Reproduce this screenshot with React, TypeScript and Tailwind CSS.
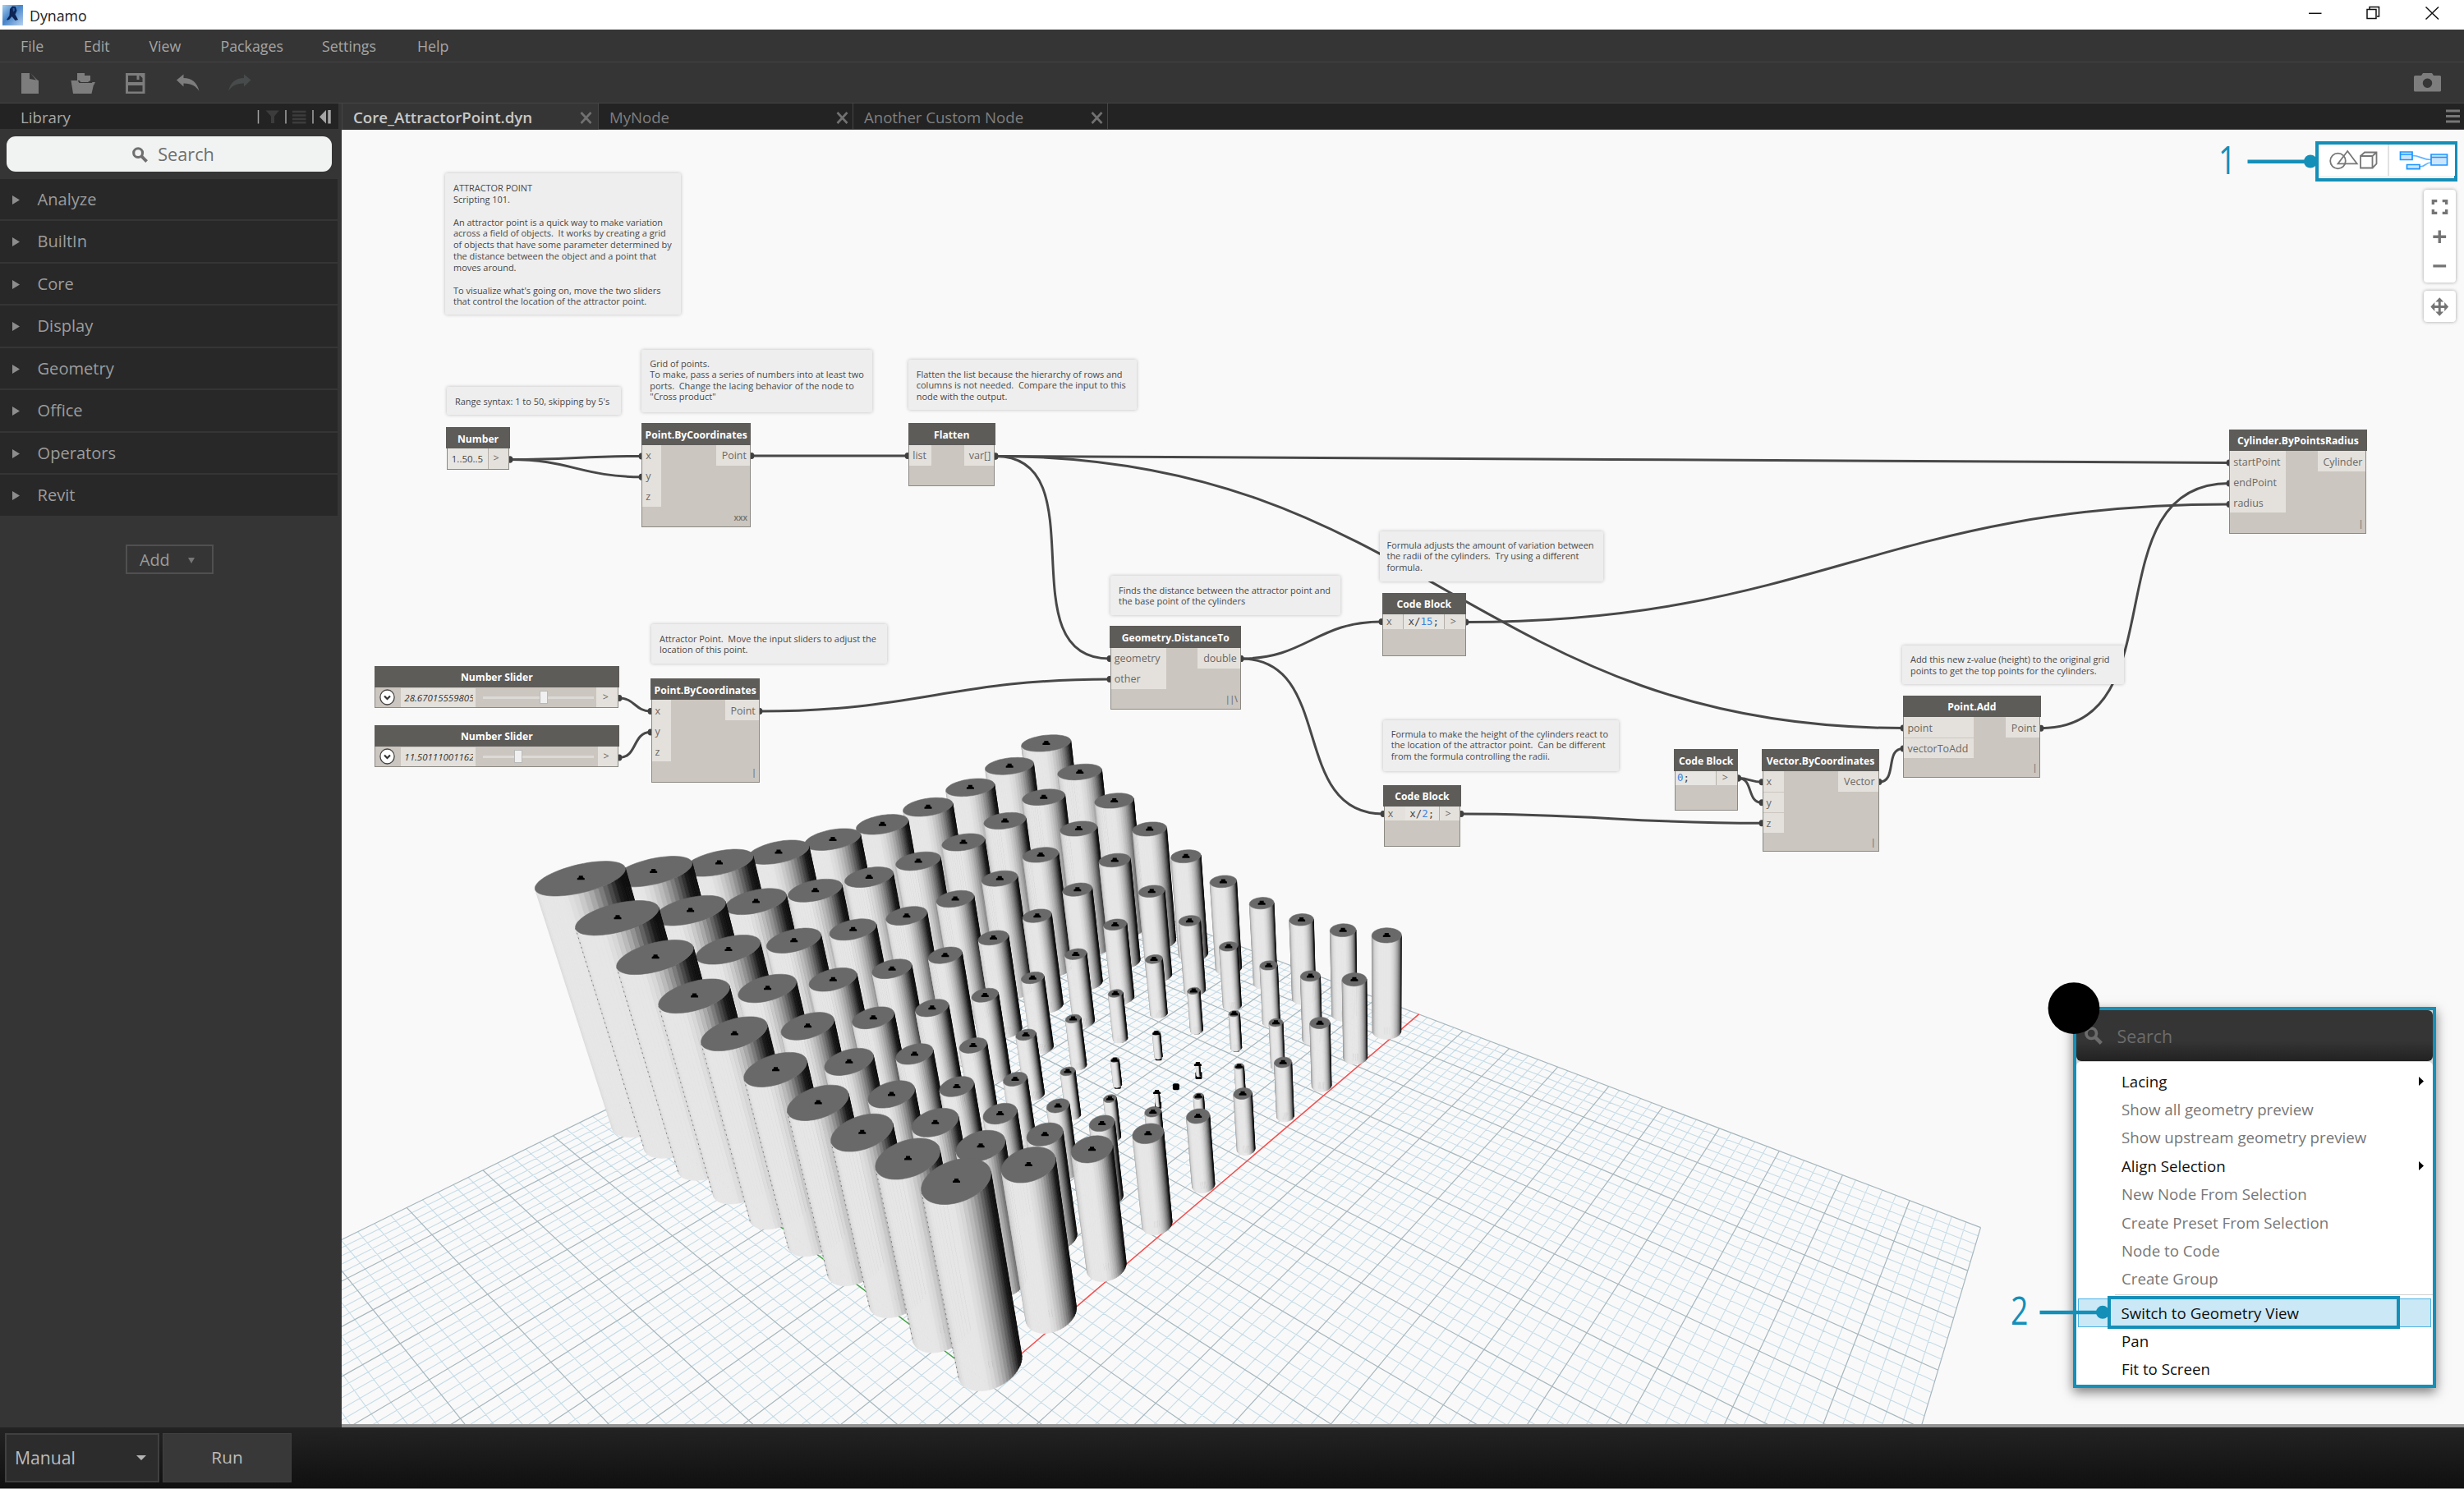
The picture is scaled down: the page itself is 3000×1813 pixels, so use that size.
import React from 'react'

/* ---------- 3D preview: camera and scene ---------- */

const UNIT = 50
const CAM = [-29.3, -51.7]
const M = [1.593873, -1.215737, -0.263103, 0.003081, -0.863176, -0.578997, -1.666049, 0.966159, 0.514364, 0.353287, -0.267914]

function project(X: number, Y: number, Z: number): [number, number] {
  const x = X / UNIT, y = Y / UNIT, z = Z / UNIT
  const d = M[8] * x + M[9] * y + M[10] * z + 1
  return [1200.3 + (500 * (M[0] * x + M[1] * y + M[2] * z + M[3])) / d, 1200.9 + (500 * (M[4] * x + M[5] * y + M[6] * z + M[7])) / d]
}

const fmt = (p: [number, number]) => `${p[0].toFixed(1)},${p[1].toFixed(1)}`

// Brightness of a side facet by the compass angle of its normal
const SHADE: [number, number][] = [
  [90, 0.3], [125, 0.5], [150, 0.7], [165, 0.84], [185, 0.9], [228, 0.9], [242, 0.84], [258, 0.69], [272, 0.5], [285, 0.3], [300, 0.09], [312, 0.06], [360, 0.05],
]
function shade(deg: number) {
  const a = ((deg % 360) + 360) % 360
  if (a <= 90) return 0.2
  for (let i = 1; i < SHADE.length; i++) {
    const [a0, b0] = SHADE[i - 1], [a1, b1] = SHADE[i]
    if (a <= a1) return b0 + ((b1 - b0) * (a - a0)) / (a1 - a0)
  }
  return 0.05
}

const ATTRACTOR = [28.67, 11.5]
const RANGE = [1, 6, 11, 16, 21, 26, 31, 36, 41, 46]
const CYLINDERS = RANGE.flatMap((x) => RANGE.map((y) => ({ x, y, dist: Math.hypot(x - ATTRACTOR[0], y - ATTRACTOR[1]) }))).sort(
  (a, b) => Math.hypot(b.x - CAM[0], b.y - CAM[1]) - Math.hypot(a.x - CAM[0], a.y - CAM[1]),
)

function Cylinder({ x, y, dist }: { x: number; y: number; dist: number }) {
  const r = dist / 15
  const h = dist / 2
  const n = 56
  const ring = (z: number) => Array.from({ length: n }, (_, i) => project(x + r * Math.cos((i * 2 * Math.PI) / n), y + r * Math.sin((i * 2 * Math.PI) / n), z))
  const top = ring(h)
  const bottom = ring(0)
  const base = project(x, y, 0)
  const cap = project(x, y, h)
  const facets = []
  let first = -1
  for (let i = 0; i < n; i++) {
    const a = ((i + 0.5) * 2 * Math.PI) / n
    const facing = Math.cos(a) * (CAM[0] - x - r * Math.cos(a)) + Math.sin(a) * (CAM[1] - y - r * Math.sin(a))
    if (facing <= 0) continue
    if (first < 0) first = i
    const j = (i + 1) % n
    const v = Math.round(shade((a * 180) / Math.PI) * 255)
    const c = `rgb(${v},${v},${v})`
    facets.push(<polygon key={i} points={[top[i], top[j], bottom[j], bottom[i]].map(fmt).join(' ')} fill={c} stroke={c} strokeWidth="0.7" />)
  }
  return (
    <g>
      <rect x={base[0] - 4} y={base[1] - 4.5} width="8" height="9" rx="1.5" fill="#000" />
      {facets}
      {x === 1 && y < 46 && (
        <line x1={top[first][0]} y1={top[first][1]} x2={bottom[first][0]} y2={bottom[first][1]} stroke="#666" strokeWidth="0.8" strokeDasharray="2 4" />
      )}
      <polygon points={top.map(fmt).join(' ')} fill="#696969" stroke="#696969" strokeWidth="0.6" />
      <path d={`M${cap[0] - 4.5} ${cap[1] + 2.2}v-2l2-1.2v-1.8h5v1.8l2 1.2v2z`} fill="#000" />
    </g>
  )
}

const GRID = Array.from({ length: 101 }, (_, i) => i - 50)

function GridLines({ major }: { major: boolean }) {
  const d = GRID.filter((g) => (g % 5 === 0) === major)
    .map((g) => `M${fmt(project(g, -50, 0))}L${fmt(project(g, 50, 0))}M${fmt(project(-50, g, 0))}L${fmt(project(50, g, 0))}`)
    .join('')
  return <path d={d} fill="none" stroke={major ? '#a6b7be' : '#c6dce7'} strokeWidth={major ? 1.2 : 1.1} />
}

/* ---------- wires ---------- */

const WIRES: [number, number, number, number][] = [
  [621, 559.5, 781, 555.4],
  [621, 559.5, 781, 580.7],
  [915, 555, 1105, 555],
  [1212, 555.4, 2714, 563.5],
  [1212, 555.4, 2317, 886.5],
  [1212, 555.4, 1351, 802],
  [1511, 802, 1682, 757],
  [1511, 802, 1684, 991],
  [925, 866, 1351, 827],
  [754, 850, 792, 866],
  [754, 922.5, 792, 891.5],
  [1785, 757.5, 2714, 614],
  [1779, 991, 2145, 1002.3],
  [2116.5, 947.5, 2145, 952.3],
  [2116.5, 947.5, 2145, 977.3],
  [2288, 952, 2317, 911.5],
  [2485, 886.7, 2714, 588.5],
]

function Scene() {
  const attractor = project(ATTRACTOR[0], ATTRACTOR[1], 0)
  const o = project(0, 0, 0)
  const px = project(50, 0, 0)
  const py = project(0, 50, 0)
  return (
    <svg className="absolute inset-0 size-full" viewBox="416 158 2584 1576" preserveAspectRatio="none">
      <GridLines major={false} />
      <GridLines major />
      <line x1={o[0]} y1={o[1]} x2={px[0]} y2={px[1]} stroke="#ff4b4b" strokeWidth="1.4" />
      <line x1={o[0]} y1={o[1]} x2={py[0]} y2={py[1]} stroke="#3fa53f" strokeWidth="1.3" />
      <rect x={attractor[0] - 4} y={attractor[1] - 4.5} width="8" height="8" rx="2" fill="#000" />
      {CYLINDERS.map((c) => (
        <Cylinder key={`${c.x}-${c.y}`} {...c} />
      ))}
      {WIRES.map(([x0, y0, x1, y1], i) => {
        const off = 0.45 * Math.hypot(x1 - x0, y1 - y0)
        return (
          <g key={i}>
            <path d={`M${x0} ${y0}C${x0 + off} ${y0} ${x1 - off} ${y1} ${x1} ${y1}`} fill="none" stroke="#484848" strokeWidth="3" />
            <ellipse cx={x0} cy={y0} rx="3.4" ry="4" fill="#404040" />
            <ellipse cx={x1} cy={y1} rx="3.4" ry="4" fill="#404040" />
          </g>
        )
      })}
    </svg>
  )
}

/* ---------- notes and nodes ---------- */

type Box = { x: number; y: number; w: number; h: number }
const place = ({ x, y, w, h }: Box) => ({ left: x - 416, top: y - 158, width: w, height: h })

const NOTES: (Box & { text: string; pt: number; pl: number; lh?: number })[] = [
  { x: 541.5, y: 211, w: 287, h: 172, pt: 11, pl: 10.5, lh: 13.85, text: "ATTRACTOR POINT\nScripting 101.\n\nAn attractor point is a quick way to make variation\nacross a field of objects.  It works by creating a grid\nof objects that have some parameter determined by\nthe distance between the object and a point that\nmoves around.\n\nTo visualize what's going on, move the two sliders\nthat control the location of the attractor point." },
  { x: 543.5, y: 471, w: 212, h: 34, pt: 11, pl: 10.5, text: "Range syntax: 1 to 50, skipping by 5's" },
  { x: 781, y: 425.5, w: 280.5, h: 76, pt: 10.5, pl: 10.3, lh: 13.4, text: 'Grid of points.\nTo make, pass a series of numbers into at least two\nports.  Change the lacing behavior of the node to\n"Cross product"' },
  { x: 1105.5, y: 438, w: 278, h: 61, pt: 10.5, pl: 10.3, text: 'Flatten the list because the hierarchy of rows and\ncolumns is not needed.  Compare the input to this\nnode with the output.' },
  { x: 792.5, y: 760, w: 287, h: 48, pt: 10.5, pl: 10.5, text: 'Attractor Point.  Move the input sliders to adjust the\nlocation of this point.' },
  { x: 1352, y: 701, w: 280, h: 48, pt: 10.5, pl: 10, text: 'Finds the distance between the attractor point and\nthe base point of the cylinders' },
  { x: 1679.5, y: 646.5, w: 272.5, h: 61.5, pt: 10, pl: 9, text: 'Formula adjusts the amount of variation between\nthe radii of the cylinders.  Try using a different\nformula.' },
  { x: 1683.5, y: 877, w: 287.5, h: 61.5, pt: 9.5, pl: 10.3, text: 'Formula to make the height of the cylinders react to\nthe location of the attractor point.  Can be different\nfrom the formula controlling the radii.' },
  { x: 2316, y: 786, w: 269.5, h: 47, pt: 10, pl: 10, text: 'Add this new z-value (height) to the original grid\npoints to get the top points for the cylinders.' },
]

type NodeDef = Box & { title: string; ins: string[]; out: string; inW: number; outW: number; lacing?: string; lines?: boolean }
const NODES: NodeDef[] = [
  { x: 781.3, y: 515.7, w: 132.7, h: 126.5, title: 'Point.ByCoordinates', ins: ['x', 'y', 'z'], out: 'Point', inW: 23, outW: 41, lacing: 'xxx' },
  { x: 1106.3, y: 515.7, w: 105, h: 76, title: 'Flatten', ins: ['list'], out: 'var[]', inW: 27, outW: 36.5 },
  { x: 792.5, y: 826.4, w: 132.3, h: 126.2, title: 'Point.ByCoordinates', ins: ['x', 'y', 'z'], out: 'Point', inW: 23, outW: 41, lacing: '|' },
  { x: 1351.8, y: 762.7, w: 159, h: 101.2, title: 'Geometry.DistanceTo', ins: ['geometry', 'other'], out: 'double', inW: 67, outW: 52, lacing: '||\\' },
  { x: 2145.5, y: 912.7, w: 142, h: 124.8, title: 'Vector.ByCoordinates', ins: ['x', 'y', 'z'], out: 'Vector', inW: 25, outW: 49, lacing: '|', lines: true },
  { x: 2317.4, y: 847, w: 166.8, h: 99.8, title: 'Point.Add', ins: ['point', 'vectorToAdd'], out: 'Point', inW: 84.5, outW: 41, lacing: '|', lines: true },
  { x: 2714.3, y: 523.3, w: 167, h: 126.5, title: 'Cylinder.ByPointsRadius', ins: ['startPoint', 'endPoint', 'radius'], out: 'Cylinder', inW: 67.5, outW: 58.5, lacing: '|' },
]

const shell = 'absolute flex flex-col border-[1.5px] border-[#8b8983] bg-[#cbc6bf] text-[12.5px] text-[#6b6864]'

function Title({ children }: { children: React.ReactNode }) {
  return <div className="-mx-[1.5px] -mt-[1.5px] flex h-[26.500px] shrink-0 items-center justify-center bg-[#5e5c59] pt-[3px] text-[12.15px] leading-none font-bold whitespace-nowrap text-white">{children}</div>
}

function GraphNode(n: NodeDef) {
  return (
    <div className={shell} style={place(n)}>
      <Title>{n.title}</Title>
      <div className="flex items-start justify-between">
        <div className="flex flex-col" style={{ width: n.inW }}>
          {n.ins.map((p, i) => (
            <div key={p} className={`flex h-[25px] items-center bg-[#e4e1dc] pt-[2.500px] pl-1 leading-none ${n.lines && i > 0 ? 'border-t border-[#cbc6bf]' : ''}`}>{p}</div>
          ))}
        </div>
        <div className="flex h-[25px] items-center justify-end bg-[#e4e1dc] pt-[2.500px] pr-1 leading-none" style={{ width: n.outW }}>{n.out}</div>
      </div>
      {n.lacing && <div className="mt-auto pr-[3px] pb-[6.500px] text-right text-[10px] leading-none font-semibold text-[#75726d]">{n.lacing}</div>}
    </div>
  )
}

function CodeBlock({ box, input, code, num, tail, cells, rowH, gap }: { box: Box; input?: string; code: string; num: string; tail: string; cells: [number, number, number]; rowH: number; gap: boolean }) {
  return (
    <div className={shell} style={place(box)}>
      <Title>Code Block</Title>
      <div className="flex bg-[#b4b0a9] *:pt-px" style={{ height: rowH }}>
        {input && <div className="flex items-center bg-[#e4e1dc] pl-1 leading-none" style={{ width: cells[0], marginRight: gap ? 1 : 0 }}>{input}</div>}
        <div className="flex items-center justify-center bg-[#e8e6e2] font-['DejaVu_Sans_Mono'] text-[12.4px] leading-none whitespace-pre text-[#444]" style={{ width: cells[1] }}>
          {code}
          <span className="text-[#3b82e0]">{num}</span>
          {tail}
        </div>
        <div className="ml-[1.5px] flex flex-1 items-center justify-center bg-[#e4e1dc] pr-1 leading-none">&gt;</div>
      </div>
    </div>
  )
}

function SliderNode({ box, value, thumb, out }: { box: Box; value: string; thumb: number; out: number }) {
  return (
    <div className={shell} style={place(box)}>
      <Title>Number Slider</Title>
      <div className="flex h-6 items-center">
        <svg className="ml-[5px] h-5 w-[19px] shrink-0" viewBox="0 0 19 20">
          <ellipse cx="9.5" cy="10" rx="8.6" ry="9" fill="#fff" stroke="#444" strokeWidth="1.3" />
          <path d="M6 8.5l3.5 3.5L13 8.500" fill="none" stroke="#333" strokeWidth="2.2" />
        </svg>
        <div className="ml-[7px] flex h-[23px] w-[91px] items-center overflow-hidden bg-[#e4e1dc] pt-0.5 pl-1 text-[11.5px] whitespace-nowrap text-[#333] italic">
          <div className="w-[84px] overflow-hidden">{value}</div>
        </div>
        <div className="relative ml-[9px] h-[3px] w-[135px] bg-[#dcdad7]">
          <div className="absolute -top-[6.500px] h-4 w-[10px] border border-[#b9b9b9] bg-[#f0f0f0]" style={{ left: thumb }} />
        </div>
        <div className="ml-auto flex h-6 items-center justify-center bg-[#e4e1dc] pr-1" style={{ width: out }}>&gt;</div>
      </div>
    </div>
  )
}

/* ---------- icons ---------- */

function Magnifier({ className }: { className: string }) {
  return (
    <svg className={className} viewBox="0 0 20 20" fill="none" stroke="currentColor">
      <circle cx="7.500" cy="7.500" r="5.700" strokeWidth="3.300" />
      <path d="M11.500 11.500L18.500 18.500" strokeWidth="4" />
    </svg>
  )
}

function TabClose({ className = '' }: { className?: string }) {
  return (
    <svg className={`size-[15px] shrink-0 ${className}`} viewBox="0 0 15 15" stroke="#717171" strokeWidth="2.6">
      <path d="M1.500 1L13.500 14M13.500 1L1.500 14" />
    </svg>
  )
}

function Header() {
  return (
    <header>
      <div className="flex h-9 items-center bg-white">
        <svg className="ml-[3px] h-[25px] w-[25px]" viewBox="0 0 25 25">
          <defs>
            <linearGradient id="logo" x1="0" y1="0" x2="1" y2="1">
              <stop offset="0" stopColor="#a9d0ee" />
              <stop offset="0.45" stopColor="#4583c8" />
              <stop offset="1" stopColor="#b7d2f0" />
            </linearGradient>
          </defs>
          <rect width="25" height="25" fill="url(#logo)" />
          <path d="M5 18l3.500-5L9 5l3-3.500 4 .5 1.500 5-2 4.500 3.500 6.500-3.500 1-4-5-3 3.500-2 1z" fill="#0d2455" />
          <path d="M12.500 4l2-.5.500 3-2 2z" fill="#2a5fa8" />
        </svg>
        <span className="ml-2 pt-0.5 text-[17.8px] text-[#222]">Dynamo</span>
        <svg className="ml-auto h-9 w-[200px]" viewBox="0 0 200 36" fill="none" stroke="#111" strokeWidth="1.5">
          <path d="M11 16.300h15.500" />
          <path d="M82 11.500h11v11H82zM85 11V8.500h11.500v11.500H94" />
          <path d="M153.500 8.500l15.500 15M169 8.500l-15.500 15" />
        </svg>
      </div>
      <nav className="relative h-[40px] border-b border-[#434343] bg-[#353535] text-[17.800px] text-[#a5a5a5]">
        <div className="flex h-full items-center pt-0.5 pl-[25px]">
          <span className="w-[77px]">File</span>
          <span className="w-[79.500px]">Edit</span>
          <span className="w-[87px]">View</span>
          <span className="w-[123.500px]">Packages</span>
          <span className="w-[116px]">Settings</span>
          <span>Help</span>
        </div>
      </nav>
      <div className="flex h-[50px] items-center border-b border-[#454545] bg-[#353535]">
        <svg className="h-[50px] w-[320px]" viewBox="0 76 320 50" fill="#7d7d7d">
          <path d="M26 89h10v7l11 2v16H26z" />
          <path d="M37 89l10 10v2l-5-6z" />
          <path d="M94 98v-9h9v3h7v6l-3 2h-9l-1-2zM86.500 98h8l2 3h14l4 0-3 13H89z" />
          <path d="M112 100h4l-2 4z" />
          <path fillRule="evenodd" d="M153 89h23.500v25H153zM156 92v8h17.500v-5l-3-3zM156 104v7.500h17.500V104zM166.500 92h3v5h-3z" />
          <path d="M215 97.500l8.500-7v4.500c10 0 16.500 5.500 19 16-4-6-9-9.500-19-9.500v4z" />
          <path fill="#474b4b" d="M305.500 97.500l-8.500-7v4.500c-10 0-16.500 5.500-19 16 4-6 9-9.500 19-9.500v4z" />
        </svg>
        <svg className="mr-[28px] ml-auto h-[23px] w-[33px]" viewBox="0 0 33 23" fill="#7d7d7d">
          <path fillRule="evenodd" d="M0 4.500q0-1.500 1.500-1.500H9l2-3h11l2 3h7.500Q33 3 33 4.500V21q0 1.500-1.500 1.500h-30Q0 22.500 0 21zM16.500 6.500a5.700 5.700 0 1 0 .01 0z" />
        </svg>
      </div>
    </header>
  )
}

const CATEGORIES = ['Analyze', 'BuiltIn', 'Core', 'Display', 'Geometry', 'Office', 'Operators', 'Revit']

function Library() {
  return (
    <aside className="w-[416px] shrink-0 bg-[#353535] text-[#9c9c9c]">
      <div className="flex h-[31px] w-[412px] items-center justify-between bg-[#232323] pl-[25px]">
        <span className="pt-[4px] text-[18.700px] leading-none text-[#a8a8a8]">Library</span>
        <svg className="h-[31px] w-[100px]" viewBox="312 126 100 31">
          <path d="M314.500 134v16.500M348 134v16.500M381 134v16.500" stroke="#a5a5a5" strokeWidth="1.500" />
          <path d="M323.500 134.500h16.500l-6 7v8.500h-4v-8.500z" fill="#3c3c3c" />
          <path d="M356 136h16.500M356 140.500h16.500M356 145h16.500M356 149.300h16.500" stroke="#3c3c3c" strokeWidth="2.600" />
          <path d="M397 134v16.500l-8-8.200z" fill="#a5a5a5" />
          <path d="M401 134v16.500" stroke="#a5a5a5" strokeWidth="3.500" />
        </svg>
      </div>
      <div className="mt-[9px] ml-2 flex h-[43px] w-[396px] items-center justify-center gap-[12px] rounded-[11px] bg-[#f1f3f2] pt-0.5 pl-[10px] text-[21.700px] text-[#6f6f6f]">
        <Magnifier className="size-[19px]" />
        <span>Search</span>
      </div>
      <div className="mt-[8.500px] w-[411px]">
        {CATEGORIES.map((c) => (
          <div key={c} className="flex h-[51.500px] items-center border-b-2 border-[#353535] bg-[#282828] pt-[1.500px] pl-[15px] text-[20.100px]">
            <svg className="mr-[20.500px] h-[11px] w-[10px]" viewBox="0 0 10 11" fill="#8d8d8d">
              <path d="M0 0l9 5.500L0 11z" />
            </svg>
            {c}
          </div>
        ))}
      </div>
      <button className="mt-[33.500px] ml-[153px] flex h-9 w-[107px] items-center justify-between border-2 border-[#505050] pt-0.5 pr-[21px] pl-[15px] text-[19.800px]">
        Add
        <svg className="h-[7px] w-[8px]" viewBox="0 0 8 7" fill="#777">
          <path d="M0 0h8L4 7z" />
        </svg>
      </button>
    </aside>
  )
}

function Tabs() {
  return (
    <div className="flex h-[32px] bg-[#232323] text-[18.600px] leading-none text-[#7f7f7f]">
      <div className="flex w-[312px] items-center justify-between border-l border-[#454545] bg-[#353535] pt-0.5 pr-[7px] pl-[13px]">
        <span className="text-[18.700px] font-semibold text-[#c8c8c8]">Core_AttractorPoint.dyn</span>
        <TabClose />
      </div>
      <div className="flex w-[310px] items-center justify-between border-b border-l border-[#454545] pt-[3.500px] pr-[5px] pl-[13px]">
        MyNode
        <TabClose />
      </div>
      <div className="flex w-[311px] items-center justify-between border-r border-b border-l border-[#454545] pt-[3.500px] pr-[5px] pl-[13px]">
        Another Custom Node
        <TabClose />
      </div>
      <div className="flex flex-1 items-center justify-end border-b border-[#454545] pr-[5px]">
        <svg className="h-[17px] w-[17px]" viewBox="0 0 17 17" stroke="#777" strokeWidth="3">
          <path d="M0 2h17M0 8.500h17M0 15h17" />
        </svg>
      </div>
    </div>
  )
}

/* ---------- canvas overlays ---------- */

function ViewControls() {
  return (
    <>
      <div className="absolute top-[14px] right-[8px] flex h-[49px] w-[173px] border-4 border-[#148fb8] bg-[#f3f3f3] pb-[3px] pl-[2px]">
        <div className="flex-1 border-r-2 border-[#e2e2e2] bg-white">
          <svg className="h-full w-[82px]" viewBox="2825 176 82 38" fill="none" stroke="#777" strokeWidth="1.800">
            <circle cx="2846.500" cy="196" r="9.300" />
            <path d="M2858.200 184l-11.700 15.300h23.200z" />
            <path d="M2874 190h14.500v14.500H2874zM2874 190l5-4.500h14.500v14l-5 5M2888.500 190l5-4.500" />
          </svg>
        </div>
        <div className="flex-1 bg-white">
          <svg className="h-full w-[80px]" viewBox="2909 176 80 38" fill="#cce5ff" stroke="#1c96ff" strokeWidth="1.700">
            <path d="M2937 189.500c10 0 12 5 23 5M2946 203c8 0 6-5 14-5" fill="none" stroke="#62b4ff" />
            <path d="M2922.500 185H2937v9.500h-14.500zM2922.500 188H2937M2960 188h19.500v13H2960zM2960 191.500h19.500M2930.500 200.500H2946v5.200h-15.500z" />
          </svg>
        </div>
      </div>
      <div className="absolute top-[72.500px] right-[10.500px] flex h-[113px] w-[38.500px] flex-col rounded-[4px] bg-white shadow-[0_0_4px_rgba(0,0,0,0.35)]">
        <svg className="size-full" viewBox="2951 230 39 113" fill="none" stroke="#747474" strokeWidth="3.400">
          <path d="M2962.500 247.500V243h5M2974 243h5v4.500M2979 253.500v4.500h-5M2967.500 258h-5v-4.500" />
          <path d="M2970.500 279.500v15.500M2962.500 287.300h16M2962.500 323.300h16" />
        </svg>
      </div>
      <div className="absolute top-[196px] right-[10.500px] h-[38px] w-[38.500px] rounded-[4px] bg-white shadow-[0_0_4px_rgba(0,0,0,0.35)]">
        <svg className="size-full" viewBox="2951 354 39 38" fill="#747474">
          <path d="M2969 366h3v6h6v3h-6v6h-3v-6h-6v-3h6z" />
          <path d="M2970.500 362l5 5.500h-10zM2970.500 385l5-5.500h-10zM2959.500 373.500l5-5.500v11zM2981.500 373.500l-5-5.500v11z" />
        </svg>
      </div>
    </>
  )
}

const MENU: [string, boolean, boolean?][] = [
  ['Lacing', true, true],
  ['Show all geometry preview', false],
  ['Show upstream geometry preview', false],
  ['Align Selection', true, true],
  ['New Node From Selection', false],
  ['Create Preset From Selection', false],
  ['Node to Code', false],
  ['Create Group', false],
]

function ContextMenu() {
  const row = 'flex h-[34.400px] items-center justify-between pr-[11px]'
  return (
    <div className="absolute top-[1067.500px] left-[2107.500px] h-[464px] w-[442px] border-4 border-[#148fb8] bg-[#d8d8d8] text-[18.700px] shadow-[0_5px_13px_rgba(0,0,0,0.5)]">
      <div className="flex h-[62px] items-center gap-[18px] rounded-[6px] bg-linear-to-b from-[#353535] from-60% to-[#222] pl-[10px] text-[21.300px] text-[#6c6c6c]">
        <Magnifier className="size-[22px]" />
        <span className="pt-0.5">Search</span>
      </div>
      <div className="mt-[1.500px] h-[392.500px] rounded-t-[5px] bg-white pt-[6.500px]">
        {MENU.map(([label, on, sub]) => (
          <div key={label} className={`${row} pl-[55.500px] ${on ? 'text-[#111]' : 'text-[#777]'}`}>
            {label}
            {sub && (
              <svg className="h-[11px] w-[6px]" viewBox="0 0 6 11">
                <path d="M0 0l6 5.500L0 11z" />
              </svg>
            )}
          </div>
        ))}
        <div className="mt-[1.500px] ml-[47px] h-[6px] border-t border-[#d0d0d0]" />
        <div className={`${row} mx-0.5 -mt-px border-[1.500px] border-[#4fb3e3] bg-[#cbe8f6] pt-px pl-[52px] text-[#111]`}>Switch to Geometry View</div>
        <div className={`${row} pl-[55.500px] text-[#111]`}>Pan</div>
        <div className={`${row} pl-[55.500px] text-[#111]`}>Fit to Screen</div>
      </div>
    </div>
  )
}

function Callouts() {
  const digit = 'absolute origin-center scale-x-[0.78] text-[48px] leading-none text-[#148fb8]'
  return (
    <>
      <div className={`${digit} top-[12px] left-[2282px]`}>1</div>
      <div className={`${digit} top-[1413px] left-[2029px]`}>2</div>
      <div className="absolute top-[1420px] left-[2150px] h-[40px] w-[356px] border-4 border-[#148fb8]" />
      <svg className="absolute inset-0 size-full" viewBox="416 158 2584 1576" preserveAspectRatio="none">
        <g fill="#148fb8" stroke="#148fb8">
          <path d="M2736.500 196.700H2820M2483.500 1598H2566" strokeWidth="4.400" />
          <circle cx="2813" cy="196.500" r="8" stroke="none" />
          <circle cx="2560" cy="1597.800" r="8" stroke="none" />
        </g>
        <circle cx="2525" cy="1227.600" r="31.400" fill="#000" />
      </svg>
    </>
  )
}

export default function App() {
  return (
    <div className="flex h-[1813px] w-[3000px] flex-col overflow-hidden bg-[#353535] font-['Open_Sans','Noto_Sans',sans-serif]">
      <Header />
      <div className="flex min-h-0 flex-1">
        <Library />
        <main className="flex min-w-0 flex-1 flex-col">
          <Tabs />
          <div className="relative flex-1 overflow-hidden bg-[#f9f9f9]">
            <Scene />
            {NODES.map((n, i) => (
              <GraphNode key={i} {...n} />
            ))}
            <div className={shell} style={place({ x: 543.8, y: 520.4, w: 76.5, h: 51.5 })}>
              <Title>Number</Title>
              <div className="flex flex-1 bg-[#b4b0a9]">
                <div className="flex w-[49px] items-center bg-[#e8e6e2] pl-[5px] text-[11.500px] text-[#444]">1..50..5</div>
                <div className="ml-px flex flex-1 items-center justify-center bg-[#e4e1dc] pr-[6px]">&gt;</div>
              </div>
            </div>
            <SliderNode box={{ x: 456.3, y: 811, w: 297, h: 51.3 }} value="28.67015559805" thumb={69} out={26} />
            <SliderNode box={{ x: 456.3, y: 883, w: 297, h: 51.3 }} value="11.50111001162" thumb={38} out={24.500} />
            <CodeBlock box={{ x: 1683, y: 722, w: 101.500, h: 76.500 }} input="x" code="x/" num="15" tail=";" cells={[24, 48.500, 0]} rowH={17.500} gap />
            <CodeBlock box={{ x: 1684.8, y: 956.300, w: 93.300, h: 74.500 }} input="x" code=" x/" num="2" tail="; " cells={[25, 41, 0]} rowH={17} gap={false} />
            <CodeBlock box={{ x: 2038.8, y: 912.700, w: 76.800, h: 74.500 }} code="" num="0" tail=";    " cells={[0, 49, 0]} rowH={17} gap={false} />
            {NOTES.map((n) => (
              <div key={n.text} className="absolute rounded-[2px] bg-[#eeeeee] text-[10.950px] whitespace-pre text-[#484848] shadow-[0_0_4px_rgba(0,0,0,0.24)]" style={{ ...place(n), paddingTop: n.pt, paddingLeft: n.pl, lineHeight: `${n.lh ?? 13.95}px` }}>
                {n.text}
              </div>
            ))}
            <ViewControls />
            <ContextMenu />
            <Callouts />
          </div>
          <div className="h-1 bg-[#949494]" />
        </main>
      </div>
      <footer className="flex h-[75px] items-center gap-[4px] border-b border-[#8a8a8a] bg-linear-to-b from-[#232323] to-[#101010] pl-1.5 text-[21.200px] text-[#bdbdbd]">
        <div className="flex h-[60px] w-[188px] items-center justify-between border-2 border-[#404040] bg-[#2c2c2c] pr-[14px] pl-[10px]">
          Manual
          <svg className="h-[6px] w-[12px]" viewBox="0 0 12 6" fill="#b5b5b5">
            <path d="M0 0h12L6 6z" />
          </svg>
        </div>
        <div className="flex h-[60px] w-[157px] items-center justify-center border border-[#404040] bg-[#383838] text-[20.800px]">Run</div>
      </footer>
    </div>
  )
}
